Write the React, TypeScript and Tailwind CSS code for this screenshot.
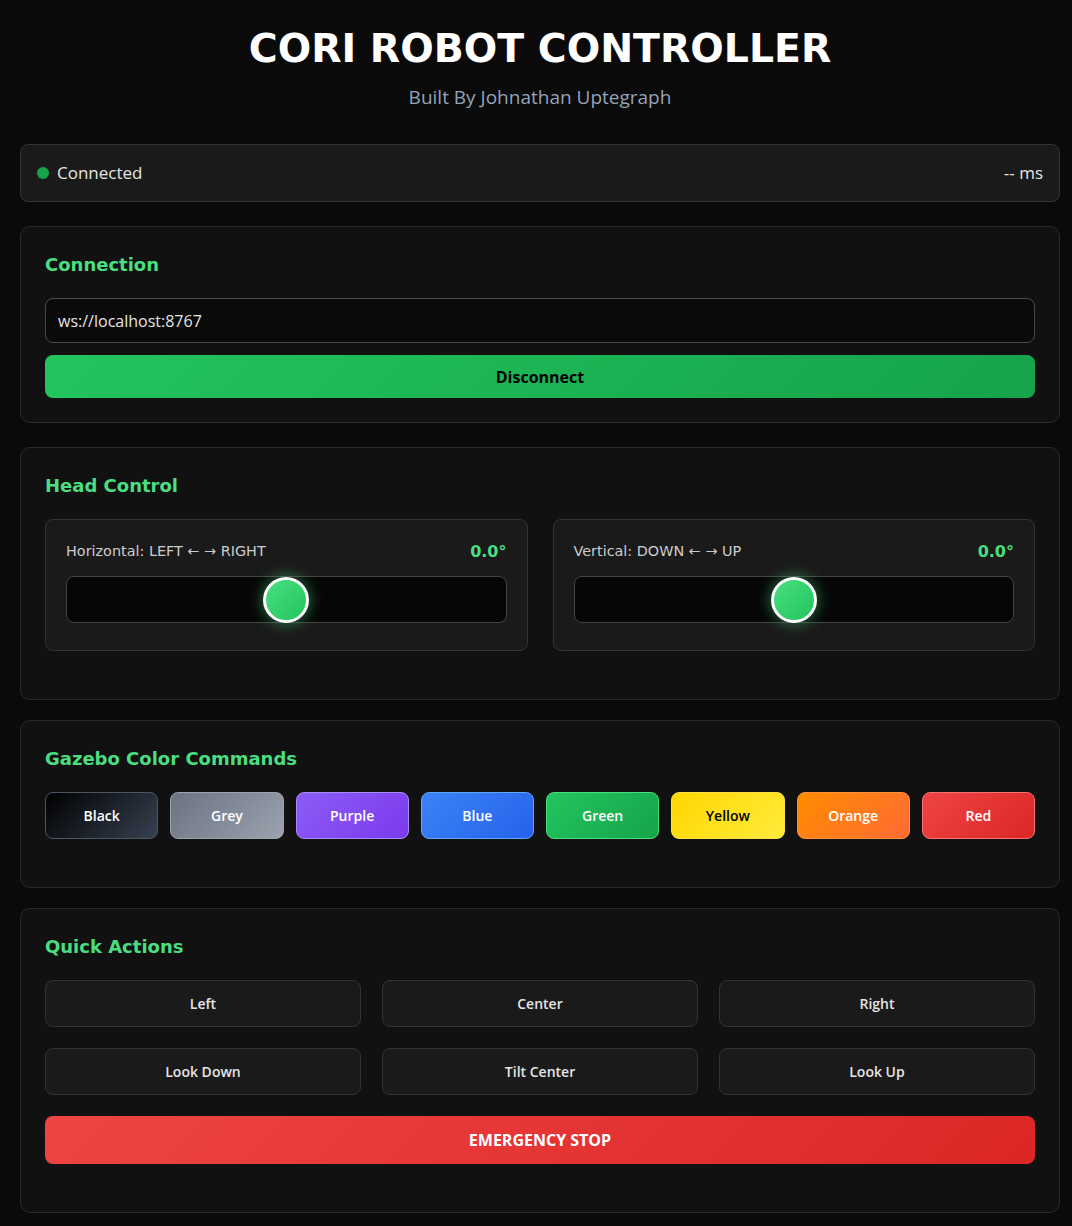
import { useState } from "react";

const colors = [
  { name: "Black", cls: "bg-linear-[135deg,#000000,#374151] border-[#4b5563] text-white" },
  { name: "Grey", cls: "bg-linear-[135deg,#6b7280,#9ca3af] border-[#9ca3af] text-white" },
  { name: "Purple", cls: "bg-linear-[135deg,#8b5cf6,#7c3aed] border-[#a78bfa] text-white" },
  { name: "Blue", cls: "bg-linear-[135deg,#3b82f6,#2563eb] border-[#60a5fa] text-white" },
  { name: "Green", cls: "bg-linear-[135deg,#22c55e,#16a34a] border-[#4ade80] text-white" },
  { name: "Yellow", cls: "bg-linear-[135deg,#ffd700,#ffeb3b] border-[#fde047] text-black" },
  { name: "Orange", cls: "bg-linear-[135deg,#ff8c00,#ff6b35] border-[#fb923c] text-white" },
  { name: "Red", cls: "bg-linear-[135deg,#ef4444,#dc2626] border-[#f87171] text-white" },
];

const actions = ["Left", "Center", "Right", "Look Down", "Tilt Center", "Look Up"];

// body text (buttons, input, status) vs headings / slider labels
const ui = "[font-family:'Open_Sans','Noto_Sans',sans-serif]";
const dv = "[font-family:'DejaVu_Sans',sans-serif]";

function Card({ title, children, className = "" }: { title: string; children: React.ReactNode; className?: string }) {
  return (
    <div className={`bg-[#111111] border border-[#2a2a2a] rounded-[10px] px-6 pt-6 ${className}`}>
      <h2 className={`${dv} text-[18px] leading-[27px] font-bold text-[#4ade80] mb-5`}>{title}</h2>
      {children}
    </div>
  );
}

function Slider({ label }: { label: string }) {
  const [val, setVal] = useState(0);
  return (
    <div className="bg-[#1a1a1a] border border-[#333333] rounded-lg px-5 pt-5 pb-[27px]">
      <div className="flex items-center justify-between h-6 mb-3">
        <span className={`${dv} text-[14.4px] text-[#cccccc]`}>{label}</span>
        <span className={`${dv} text-[16px] font-bold text-[#4ade80]`}>{val.toFixed(1)}°</span>
      </div>
      <input
        type="range"
        min={-90}
        max={90}
        step={1}
        value={val}
        onChange={(e) => setVal(Number(e.target.value))}
        className="block w-full h-[47px] appearance-none bg-[#060606] border border-[#444444] rounded-lg outline-none cursor-pointer [&::-webkit-slider-thumb]:appearance-none [&::-webkit-slider-thumb]:w-[46px] [&::-webkit-slider-thumb]:h-[46px] [&::-webkit-slider-thumb]:rounded-full [&::-webkit-slider-thumb]:bg-[linear-gradient(135deg,#4ade80,#22c55e)] [&::-webkit-slider-thumb]:border-[3px] [&::-webkit-slider-thumb]:border-white [&::-webkit-slider-thumb]:shadow-[0_0_15px_rgba(74,222,128,0.55)]"
      />
    </div>
  );
}

export default function App() {
  const [url, setUrl] = useState("ws://localhost:8767");

  return (
    <div className={`h-screen overflow-y-auto bg-[#0a0a0a] pl-5 pr-3 pb-[13px] ${ui}`}>
      <div className="pt-6 text-center">
        <h1 className={`${dv} text-[39.4px] leading-[48px] font-bold text-white`}>CORI ROBOT CONTROLLER</h1>
        <p className="mt-3 text-[19px] leading-[27px] text-[#94a3b8]">Built By Johnathan Uptegraph</p>
      </div>

      <div className="mt-[33px] flex items-center justify-between h-[58px] px-4 bg-[#1a1a1a] border border-[#333333] rounded-lg text-[17px] text-[#e5e5e5]">
        <div className="flex items-center gap-2">
          <span className="w-3 h-3 rounded-full bg-[#16a34a]" />
          <span>Connected</span>
        </div>
        <span>-- ms</span>
      </div>

      <Card title="Connection" className="mt-6 pb-6">
        <input
          value={url}
          onChange={(e) => setUrl(e.target.value)}
          className="block w-full h-[45px] px-3 bg-[#0a0a0a] border border-[#4a4a4a] rounded-lg text-[16px] text-[#e5e5e5] outline-none"
        />
        <button className="mt-3 w-full h-[43px] rounded-lg bg-linear-[135deg,#22c55e,#16a34a] text-black font-bold text-[16px]">
          Disconnect
        </button>
      </Card>

      <Card title="Head Control" className="mt-6 pb-12">
        <div className="grid grid-cols-2 gap-[25px]">
          <Slider label="Horizontal: LEFT ← → RIGHT" />
          <Slider label="Vertical: DOWN ← → UP" />
        </div>
      </Card>

      <Card title="Gazebo Color Commands" className="mt-5 pb-12">
        <div className="grid grid-cols-8 gap-3">
          {colors.map((c) => (
            <button key={c.name} className={`h-[47px] rounded-lg border text-[14px] font-semibold ${c.cls}`}>
              {c.name}
            </button>
          ))}
        </div>
      </Card>

      <Card title="Quick Actions" className="mt-5 pb-12">
        <div className="grid grid-cols-3 gap-[21px]">
          {actions.map((a) => (
            <button
              key={a}
              className="h-[47px] rounded-lg bg-[#1a1a1a] border border-[#333333] text-[14px] font-semibold text-[#e5e5e5]"
            >
              {a}
            </button>
          ))}
        </div>
        <button className="mt-[21px] w-full h-[48px] rounded-lg bg-linear-[135deg,#ef4444,#dc2626] text-white font-bold text-[16px]">
          EMERGENCY STOP
        </button>
      </Card>
    </div>
  );
}
